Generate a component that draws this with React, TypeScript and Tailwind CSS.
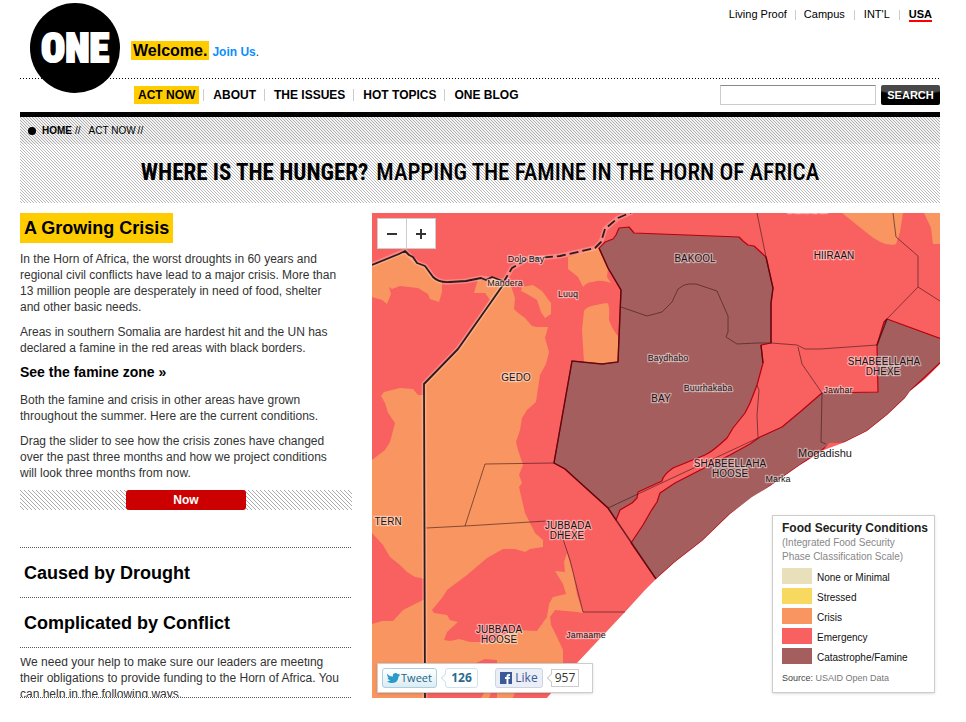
import { useState } from "react";

const fineStripes =
  "bg-[conic-gradient(from_0deg_at_1px_1px,transparent_270deg,#b8b8b8_270deg),conic-gradient(from_0deg_at_1px_1px,transparent_270deg,#b8b8b8_270deg),conic-gradient(from_0deg_at_1px_1px,transparent_270deg,#b8b8b8_270deg)] bg-[size:3px_3px] bg-[position:0_0,1px_1px,2px_2px]";

const stripes =
  "bg-[conic-gradient(from_0deg_at_1px_1px,transparent_270deg,#aaa_270deg),conic-gradient(from_0deg_at_1px_1px,transparent_270deg,#aaa_270deg),conic-gradient(from_0deg_at_1px_1px,transparent_270deg,#aaa_270deg),conic-gradient(from_0deg_at_1px_1px,transparent_270deg,#aaa_270deg)] bg-[size:4px_4px] bg-[position:0_0,1px_1px,2px_2px,3px_3px]";

const dotted =
  "h-px bg-[repeating-linear-gradient(90deg,#555_0_1px,transparent_1px_2px)]";

const navItems = ["ACT NOW", "ABOUT", "THE ISSUES", "HOT TOPICS", "ONE BLOG"];

const legend = [
  { label: "None or Minimal", color: "bg-[#e8dfbb]" },
  { label: "Stressed", color: "bg-[#f7d95f]" },
  { label: "Crisis", color: "bg-[#f89560]" },
  { label: "Emergency", color: "bg-[#f96060]" },
  { label: "Catastrophe/Famine", color: "bg-[#a55e5e]" },
];

const regionLabels: [string, number, number][] = [
  ["BAKOOL", 695, 262],
  ["HIIRAAN", 834, 259],
  ["GEDO", 516, 381],
  ["BAY", 661, 402],
  ["SHABEELLAHA", 884, 365],
  ["DHEXE", 883, 375],
  ["SHABEELLAHA", 730, 467],
  ["HOOSE", 730, 477],
  ["JUBBADA", 568, 529],
  ["DHEXE", 567, 539],
  ["JUBBADA", 499, 633],
  ["HOOSE", 499, 643],
  ["TERN", 388, 525],
];

const townLabels: [string, number, number][] = [
  ["Dolo Bay", 526, 262],
  ["Mandera", 505, 286],
  ["Luuq", 568, 297],
  ["Baydhabo", 668, 361],
  ["Buurhakaba", 708, 391],
  ["Jawhar", 838, 393],
  ["Marka", 778, 482],
  ["Jamaame", 586, 638],
  ["Buloburde", 808, 213],
];

function Logo() {
  return (
    <svg width="90" height="90" viewBox="0 0 90 90" role="img" aria-label="ONE">
      <circle cx="45" cy="45" r="45" />
      <text
        x="45"
        y="59"
        textAnchor="middle"
        fill="#fff"
        stroke="#fff"
        strokeWidth="2"
        className="font-['Roboto_Condensed','Roboto',sans-serif] text-[40px] font-black"
      >
        ONE
      </text>
    </svg>
  );
}

function CrisisMap() {
  return (
    <svg
      className="block h-[485px] w-full"
      viewBox="372 213 568 485"
      preserveAspectRatio="xMinYMin slice"
      role="img"
      aria-label="Food security map of the Horn of Africa"
    >
      <rect x="372" y="213" width="568" height="485" fill="#f96060" />
      <g fill="#f89560">
        <path d="M372 265L405 251L417 263L425 266L433 277L442 282L442 292L439 302L430 299L428 294L418 288L400 286L392 289L389 287L391 294L387 304L382 300L372 297Z" />
        <path d="M478 279L483 281L490 278L503 281L511 286L515 298L514 309L517 312L525 318L532 326L537 327L548 327L545 338L549 352L546 364L540 375L537 395L536 402L527 410L522 418L520 430L516 442L518 450L523 465L519 475L522 483L519 487L522 500L525 513L530 523L535 533L543 540L543 547L530 549L525 552L515 549L503 549L487 558L467 575L447 590L442 598L432 610L434 613L447 615L450 620L458 622L447 632L444 640L450 641L459 639L470 642L490 642L500 635L517 630L537 631L547 617L549 604L553 597L566 594L563 584L555 571L565 572L564 562L567 553L573 573L577 595L583 613L577 612L555 610L550 617L551 625L557 637L563 650L563 675L555 690L515 693L513 698L372 698L372 624L382 621L393 621L403 610L425 599L425 579L415 577L407 572L400 565L390 557L383 545L372 533L372 460L385 450L390 442L395 423L388 413L385 403L381 396L384 392L392 390L400 388L413 389L418 395L424 395L424 384L458 349L490 300L485 293L474 293Z" />
        <path d="M522 287L533 285L542 291L551 303L551 314L545 318L541 312L537 300L527 294L521 291Z" />
        <path d="M568 257L598 248L608 268L607 277L611 283Q600 279 593 282Q587 282 583 287L578 277L568 269Z" />
        <path d="M584 311Q585 306 607 303Q610 304 609 320Q612 329 618 336L618 362L602 364L584 362L582 330Z" />
        <path d="M842 213L867 233Q885 248 896 244L900 232L903 213ZM924 213L931 228L933 244L940 244V213Z" />
      </g>
      <path fill="#f96060" d="M476 663L485 659L497 660V665H476ZM426 693H484L481 698H426ZM491 693H497V698H489ZM515 693H560V698H513Z" />

      <g fill="#a55e5e" stroke="#b8000f" strokeWidth="1.2" strokeLinejoin="round">
        <path d="M599 248L605 242L613 239L616 235L619 228L629 227L634 233L739 237L743 241L748 245L754 246L766 257L773 288L771 303L771 343L761 345L763 363L757 385L750 403L745 413L733 428L727 438Q712 452 705 455L673 468Q663 475 662 481L638 492L637 498L632 503L620 510L616 520L608 508L565 469L554 463L572 361L602 364L618 362L621 290L608 268Z" />
        <path d="M942 339L887 319L884 322L877 345L878 392L822 393L800 412L782 427L760 437L750 444L730 455L708 466L675 483L660 493L657 502L651 511L643 525L631 543L656 579L675 562L702 541L730 514L770 486L800 465L826 447L830 444L845 442L867 431L887 415L905 398L911 390L942 361Z" />
      </g>
      <path
        fill="#fff"
        d="M941 363L925 379L910 391L905 398L887 415L867 431L845 442L824 450L800 465L770 486L752 497L730 514L702 541L675 562L656 579L645 590L625 612L577 663L546 699H941Z"
      />
      <path fill="#f96060" d="M845 442L829 443L824 449L833 446Z" />

      <g fill="none" stroke="#3a1818" strokeOpacity="0.6" strokeWidth="1">
        <path d="M621 307L647 316L662 312L672 302L678 289Q684 284 689 284L696 284L717 291L728 316L728 332L726 337L737 344L757 343L771 343L797 345L805 349L820 349L877 345" />
        <path d="M757 213L766 257M798 347L802 364L822 393L821 442L826 444" />
        <path d="M884 322L918 287L918 256L896 237L893 213M918 287L940 301" />
        <path d="M757 385L759 390L757 415L758 438L608 508M426 528L465 526L547 521M465 526L485 464L554 463" />
        <path d="M560 530L570 560L583 612L625 612" />
      </g>
      <g fill="none" stroke="#4a0a0e" strokeWidth="1.4" strokeOpacity="0.8">
        <path d="M599 248L608 268L621 290L618 362L602 364L572 361L554 463L565 469L608 508L656 579M766 257L773 288L771 303V343M887 319L877 345M763 363L761 345" />
      </g>

      <g fill="none" strokeLinejoin="round">
        <g stroke="#ffd0c8" strokeOpacity="0.35" strokeWidth="5">
          <path d="M372 265L405 251L417 263L425 266L433 277Q439 283 450 282L466 281L481 278L503 281M503 285L458 349L424 384L425 698" />
          <path d="M503 283L512 268L527 259L560 256L595 248L601 242L605 229L618 218L632 212" />
        </g>
        <path
          stroke="#2e1c1c"
          strokeWidth="1.8"
          d="M372 265L399 254L405 251L409 255L413 257L417 263L425 266L433 277Q439 283 450 282L466 281L481 278L486 280L492 277L503 281M503 285L458 349L424 384L425 698"
        />
        <path
          stroke="#2e1c1c"
          strokeWidth="1.8"
          strokeDasharray="9 4"
          d="M503 283L512 268L527 259L560 256L595 248L601 242L605 229L618 218L632 212"
        />
      </g>

      <g
        textAnchor="middle"
        fill="#1c1414"
        stroke="#fff"
        strokeOpacity="0.45"
        strokeWidth="2.5"
        strokeLinejoin="round"
        paintOrder="stroke"
        className="font-['Liberation_Sans',Arial,sans-serif]"
      >
        {regionLabels.map(([name, x, y]) => (
          <text key={`${name}${x}`} x={x} y={y} className="text-[10px]">
            {name}
          </text>
        ))}
        {townLabels.map(([name, x, y]) => (
          <text key={name} x={x} y={y} className="text-[9px]">
            {name}
          </text>
        ))}
        <text x="825" y="457" className="text-[11px]">
          Mogadishu
        </text>
      </g>
    </svg>
  );
}

function ShareBar() {
  return (
    <div className="absolute bottom-[5px] left-[5px] flex h-[30px] w-[216px] items-center border border-[#ccc] bg-white px-1 font-['Open_Sans',sans-serif] shadow-sm">
      <button className="flex h-5 w-[55px] items-center justify-center gap-px rounded-[3px] border border-[#a9cfe0] bg-linear-to-b from-white to-[#dcecf4] text-[11px] text-[#186487]">
        <svg width="13" height="12" viewBox="0 0 24 20" fill="#2a9ac9">
          <path d="M0 2q5 6 11 5Q10 2 14 1q4-1 6 2l4-1-2 3 2 0-3 3q0 10-11 11Q4 20 0 16q4 0 6-2-4 0-5-4h2Q0 7 0 2z" />
        </svg>
        Tweet
      </button>
      <span className="relative ml-2 flex h-5 w-[33px] items-center justify-center rounded-[3px] border border-[#cfe3ee] bg-white text-[12px] font-bold text-[#2b6a8e]">
        <i className="absolute -left-1 size-[6px] rotate-45 border-b border-l border-[#cfe3ee] bg-white" />
        126
      </span>
      <button className="ml-[17px] flex h-5 w-12 items-center justify-center gap-[3px] rounded-[3px] border border-[#cad4e7] bg-[#eceef5] text-[12px] text-[#3b5998]">
        <svg width="12" height="12" viewBox="0 0 12 12">
          <rect width="12" height="12" fill="#3b5998" />
          <path d="M6.500 12V7H5V5h1.500V4Q6.500 2 9 2h1v2H9q-.6 0-.6.600V5H10L9.700 7H8.400v5z" fill="#fff" />
        </svg>
        Like
      </button>
      <span className="relative ml-2 flex h-[18px] w-7 items-center justify-center border border-[#ccc] bg-white text-[12px] text-[#333]">
        <i className="absolute -left-1 size-[6px] rotate-45 border-b border-l border-[#ccc] bg-white" />
        957
      </span>
    </div>
  );
}

export default function App() {
  const [period, setPeriod] = useState(1);
  return (
    <div className="min-h-[722px] bg-white pr-[26px] pl-5 font-['Liberation_Sans',Arial,sans-serif] text-[12px] text-[#333]">
      <header className="relative">
        <a href="#home" className="absolute top-[3px] left-[10px] z-10">
          <Logo />
        </a>
        <div className="flex h-[78px] justify-between pl-[111px]">
          <div className="flex items-baseline gap-[3px] pt-[41px]">
            <span className="bg-[#fc0] px-[2px] text-[16px] leading-[19px] font-bold text-black">Welcome.</span>
            <span>
              <a href="#join" className="font-bold text-[#0d8eff]">
                Join Us
              </a>
              .
            </span>
          </div>
          <nav aria-label="Sites" className="flex pt-[7px] pr-2 text-[11px] leading-[14px] text-black">
            <a href="#proof">Living Proof</a>
            <span className="mx-2 my-[3px] h-[10px] w-px bg-[#ccc]" />
            <a href="#campus">Campus</a>
            <span className="mx-[9px] my-[3px] h-[10px] w-px bg-[#ccc]" />
            <a href="#intl">INT'L</a>
            <span className="mx-[9px] my-[3px] h-[10px] w-px bg-[#ccc]" />
            <a href="#usa" className="h-[15px] border-b-2 border-[#f00] font-bold">
              USA
            </a>
          </nav>
        </div>
        <div className="h-px bg-[repeating-linear-gradient(90deg,#000_0_1px,transparent_1px_3px)]" />
        <div className="flex h-[33px] items-center justify-between pb-px pl-[114px]">
          <nav aria-label="Main" className="flex items-center text-[12px] font-bold text-black">
            {navItems.map((item, i) => (
              <span key={item} className="flex items-center">
                {i > 0 && <span className="mx-1 h-3 w-px bg-[#ccc]" />}
                <a href="#nav" className={i === 0 ? "bg-[#fc0] px-1 leading-[18px]" : "pr-1 pl-[5px] leading-[18px]"}>
                  {item}
                </a>
              </span>
            ))}
          </nav>
          <form className="flex items-center gap-[5px]">
            <input
              aria-label="Search"
              className="h-5 w-[156px] border border-[#ccc] border-t-[#888] bg-white px-1 outline-none"
            />
            <button
              type="button"
              className="h-5 w-[59px] rounded-[2px] bg-[radial-gradient(45px_10px_at_50%_0,#484848_0_85%,#000_100%)] text-[11px] font-bold text-white"
            >
              SEARCH
            </button>
          </form>
        </div>
      </header>

      <section className={`h-[91px] border-t-[5px] border-black text-black ${fineStripes}`}>
        <nav aria-label="Breadcrumb" className="flex h-[27px] items-center bg-black/5 pl-2 text-[10px]">
          <span className="mr-[6px] size-2 rounded-full bg-black" />
          <a href="#home" className="font-bold">
            HOME
          </a>
          <span className="mr-2 ml-[3px]">//</span>
          <a href="#act">ACT NOW</a>
          <span className="ml-[2px]">//</span>
        </nav>
        <h1 className="flex justify-center gap-2 pt-3 pr-[-1px] font-['Roboto_Condensed','Roboto',sans-serif] text-[23px] leading-[34px] whitespace-nowrap">
          <span className="font-bold">WHERE IS THE HUNGER?</span>
          <span className="font-medium">MAPPING THE FAMINE IN THE HORN OF AFRICA</span>
        </h1>
      </section>

      <main className="mt-[10px] flex gap-5">
        <div className="w-[332px] shrink-0 leading-4">
          <h2>
            <button className="block bg-[#fc0] px-1 text-[18px] leading-[30px] font-bold text-black">
              A Growing Crisis
            </button>
          </h2>
          <div className="flex flex-col gap-[9px] pt-2">
            <p>
              In the Horn of Africa, the worst droughts in 60 years and
              <br />
              regional civil conflicts have lead to a major crisis. More than
              <br />
              13 million people are desperately in need of food, shelter
              <br />
              and other basic needs.
            </p>
            <p>
              Areas in southern Somalia are hardest hit and the UN has
              <br />
              declared a famine in the red areas with black borders.
            </p>
            <a href="#famine" className="pb-1 text-[14px] leading-[14px] font-bold text-black">
              See the famine zone »
            </a>
            <p>
              Both the famine and crisis in other areas have grown
              <br />
              throughout the summer. Here are the current conditions.
            </p>
            <p>
              Drag the slider to see how the crisis zones have changed
              <br />
              over the past three months and how we project conditions
              <br />
              will look three months from now.
            </p>
            <div className="relative h-5">
              <input
                type="range"
                min="0"
                max="2"
                value={period}
                onChange={(e) => setPeriod(Number(e.target.value))}
                aria-label="Time period"
                className={`block h-5 w-full appearance-none ${stripes} [&::-webkit-slider-thumb]:h-5 [&::-webkit-slider-thumb]:w-[120px] [&::-webkit-slider-thumb]:appearance-none [&::-webkit-slider-thumb]:rounded-[3px] [&::-webkit-slider-thumb]:bg-[#c00]`}
              />
              <span className="pointer-events-none absolute inset-0 text-center leading-5 font-bold text-white">
                Now
              </span>
            </div>
          </div>
          <div className={`mt-[37px] ${dotted}`} />
          <h2>
            <button className="block h-[49px] w-full px-1 text-left text-[18px] font-bold text-black">
              Caused by Drought
            </button>
          </h2>
          <div className={dotted} />
          <h2>
            <button className="block h-[49px] w-full px-1 text-left text-[18px] font-bold text-black">
              Complicated by Conflict
            </button>
          </h2>
          <div className={dotted} />
          <div className="mt-[10px] h-[39px] overflow-hidden">
            <p className="-mt-1">
              We need your help to make sure our leaders are meeting
              <br />
              their obligations to provide funding to the Horn of Africa. You
              <br />
              can help in the following ways.
            </p>
          </div>
          <div className={dotted} />
        </div>

        <div className="relative min-w-0 flex-1 self-start">
          <CrisisMap />
          <div className="absolute top-[5px] left-[5px] flex h-[31px] border border-[#ccc] bg-white">
            <button aria-label="Zoom out" className="flex w-7 items-center justify-center">
              <span className="h-[2px] w-[10px] bg-[#333]" />
            </button>
            <button aria-label="Zoom in" className="flex w-[29px] items-center justify-center border-l border-[#ccc]">
              <svg width="10" height="10" viewBox="0 0 10 10">
                <path d="M5 0V10M0 5H10" stroke="#333" strokeWidth="2" />
              </svg>
            </button>
          </div>
          <ShareBar />
          <aside className="absolute right-[5px] bottom-[5px] w-[163px] border border-[#ccc] bg-white px-[9px] pt-1 pb-2 shadow-sm">
            <h3 className="text-[12px] leading-4 font-bold whitespace-nowrap text-[#222]">Food Security Conditions</h3>
            <p className="text-[10px] leading-[14px] text-[#888]">
              (Integrated Food Security
              <br />
              Phase Classification Scale)
            </p>
            <ul className="mt-1 flex flex-col gap-1 text-[10px] text-[#111]">
              {legend.map(({ label, color }) => (
                <li key={label} className="flex h-4 gap-[5px]">
                  <span className={`h-4 w-[30px] ${color}`} />
                  <span className="pt-[2px] leading-4 whitespace-nowrap">{label}</span>
                </li>
              ))}
            </ul>
            <p className="mt-2 text-[9px] leading-3 text-[#444]">
              Source:{" "}
              <a href="#data" className="text-[#777]">
                USAID Open Data
              </a>
            </p>
          </aside>
        </div>
      </main>
    </div>
  );
}
